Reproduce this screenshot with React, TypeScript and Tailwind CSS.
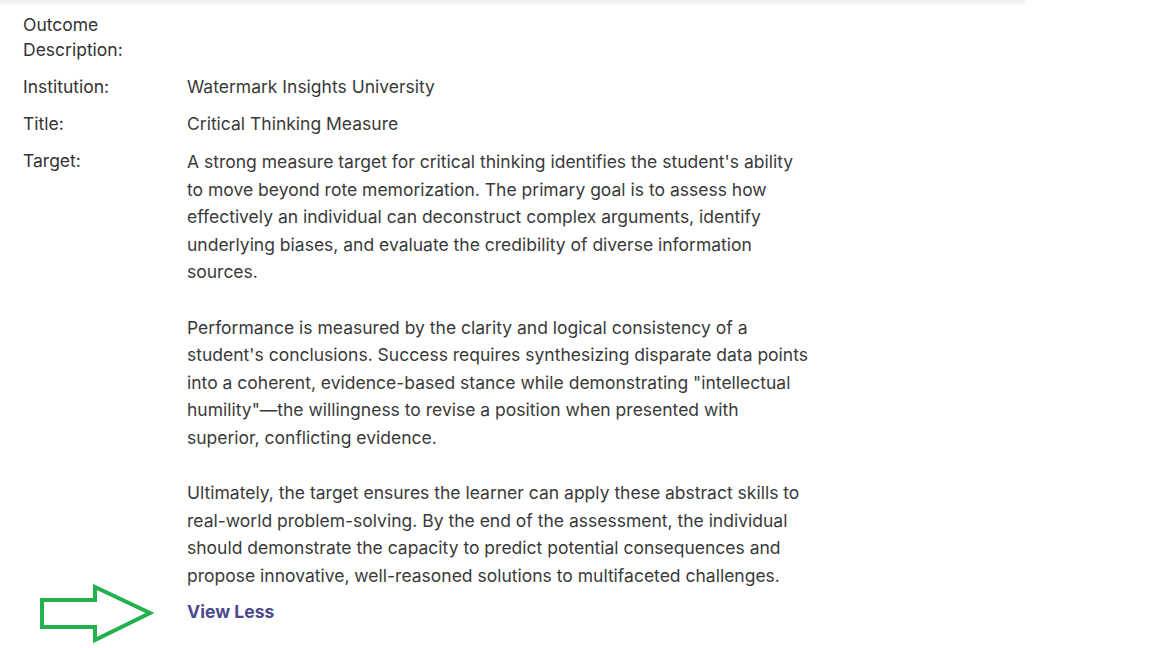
const target = `A strong measure target for critical thinking identifies the student's ability to move beyond rote memorization. The primary goal is to assess how effectively an individual can deconstruct complex arguments, identify underlying biases, and evaluate the credibility of diverse information sources.

Performance is measured by the clarity and logical consistency of a student's conclusions. Success requires synthesizing disparate data points into a coherent, evidence-based stance while demonstrating "intellectual humility"—the willingness to revise a position when presented with superior, conflicting evidence.

Ultimately, the target ensures the learner can apply these abstract skills to real-world problem-solving. By the end of the assessment, the individual should demonstrate the capacity to predict potential consequences and propose innovative, well-reasoned solutions to multifaceted challenges.`;

function Arrow() {
  return (
    <svg
      className="absolute left-[38px] top-[584px]"
      width="118"
      height="60"
      viewBox="0 0 118 60"
    >
      <path
        d="M4 16 L57 16 L57 3 L112 29 L57 56 L57 43 L4 43 Z"
        fill="none"
        stroke="#22b14c"
        strokeWidth="4"
        strokeLinejoin="miter"
      />
    </svg>
  );
}

export default function App() {
  return (
    <div className="relative w-[1152px] h-[648px] bg-white font-['Inter','Noto_Sans',sans-serif] overflow-hidden">
      <div className="h-[6px] w-[1025px] bg-gradient-to-b from-[#eeeeee] to-white" />
      <div className="pl-[23px] pt-[6px] grid grid-cols-[140px_625px] gap-x-[24px] gap-y-[12px] text-[17.5px] text-[#3a3a3a]">
        <div className="leading-[25px] text-[#333]">Outcome Description:</div>
        <div className="leading-[25px]"></div>

        <div className="leading-[25px] text-[#333]">Institution:</div>
        <div className="leading-[25px]">Watermark Insights University</div>

        <div className="leading-[25px] text-[#333]">Title:</div>
        <div className="leading-[25px]">Critical Thinking Measure</div>

        <div className="leading-[25px] text-[#333]">Target:</div>
        <div>
          <p className="leading-[27.6px] whitespace-pre-line">{target}</p>
          <button className="mt-[10px] text-[17.6px] font-bold leading-[24px] text-[#4d4a8c]">
            View Less
          </button>
        </div>
      </div>
      <Arrow />
    </div>
  );
}
